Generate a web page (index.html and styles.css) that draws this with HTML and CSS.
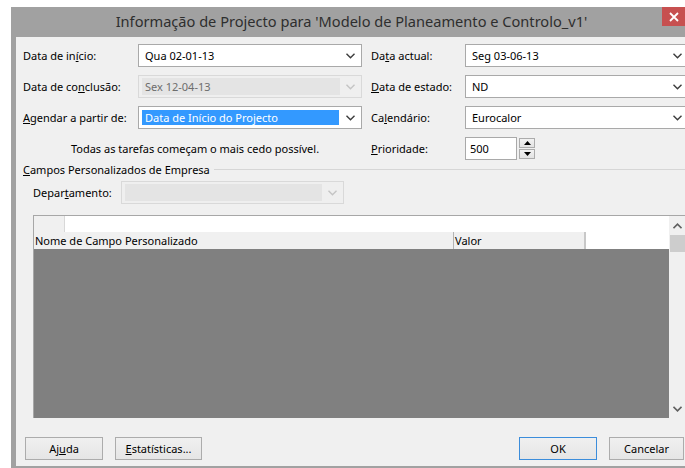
FILE: index.html
```html
<!DOCTYPE html>
<html lang="pt">
<head>
<meta charset="utf-8">
<title>Informação de Projecto</title>
<link rel="stylesheet" href="styles.css">
</head>
<body>
<div class="window">
  <div class="titlebar">
    <span class="title">Informação de Projecto para 'Modelo de Planeamento e Controlo_v1'</span>
    <div class="close">
      <svg width="10" height="10" viewBox="0 0 10 10"><path d="M1 1L9 9M9 1L1 9" stroke="#fff" stroke-width="1.8"/></svg>
    </div>
  </div>
  <div class="client">
    <div class="form">
      <span class="label">Data de in<u>í</u>cio:</span>
      <div class="combo"><span class="value">Qua 02-01-13</span><span class="arrow"><svg width="9" height="6" viewBox="0 0 9 6"><path d="M0.5 0.8L4.5 4.8L8.5 0.8" fill="none" stroke="#3c3c3c" stroke-width="1.4"/></svg></span></div>
      <span class="label col3">Da<u>t</u>a actual:</span>
      <div class="combo"><span class="value">Seg 03-06-13</span><span class="arrow"><svg width="9" height="6" viewBox="0 0 9 6"><path d="M0.5 0.8L4.5 4.8L8.5 0.8" fill="none" stroke="#3c3c3c" stroke-width="1.4"/></svg></span></div>

      <span class="label">Data de co<u>n</u>clusão:</span>
      <div class="combo disabled"><span class="value">Sex 12-04-13</span><span class="arrow"><svg width="9" height="6" viewBox="0 0 9 6"><path d="M0.5 0.8L4.5 4.8L8.5 0.8" fill="none" stroke="#c4c4c4" stroke-width="1.4"/></svg></span></div>
      <span class="label col3"><u>D</u>ata de estado:</span>
      <div class="combo"><span class="value">ND</span><span class="arrow"><svg width="9" height="6" viewBox="0 0 9 6"><path d="M0.5 0.8L4.5 4.8L8.5 0.8" fill="none" stroke="#3c3c3c" stroke-width="1.4"/></svg></span></div>

      <span class="label"><u>A</u>gendar a partir de:</span>
      <div class="combo"><span class="value selected">Data de Início do Projecto</span><span class="arrow"><svg width="9" height="6" viewBox="0 0 9 6"><path d="M0.5 0.8L4.5 4.8L8.5 0.8" fill="none" stroke="#3c3c3c" stroke-width="1.4"/></svg></span></div>
      <span class="label col3">Ca<u>l</u>endário:</span>
      <div class="combo"><span class="value">Eurocalor</span><span class="arrow"><svg width="9" height="6" viewBox="0 0 9 6"><path d="M0.5 0.8L4.5 4.8L8.5 0.8" fill="none" stroke="#3c3c3c" stroke-width="1.4"/></svg></span></div>

      <span class="note">Todas as tarefas começam o mais cedo possível.</span>
      <span class="label col3"><u>P</u>rioridade:</span>
      <div class="spin">
        <div class="spin-field">500</div>
        <div class="spin-buttons">
          <span class="spin-btn"><svg width="7" height="4" viewBox="0 0 7 4"><path d="M0 4L3.5 0L7 4Z" fill="#000"/></svg></span>
          <span class="spin-btn"><svg width="7" height="4" viewBox="0 0 7 4"><path d="M0 0L3.5 4L7 0Z" fill="#000"/></svg></span>
        </div>
      </div>
    </div>

    <div class="group-head"><span><u>C</u>ampos Personalizados de Empresa</span><span class="rule"></span></div>

    <div class="dept">
      <span class="label">Depar<u>t</u>amento:</span>
      <div class="combo disabled small"><span class="value"></span><span class="arrow"><svg width="9" height="6" viewBox="0 0 9 6"><path d="M0.5 0.8L4.5 4.8L8.5 0.8" fill="none" stroke="#c4c4c4" stroke-width="1.4"/></svg></span></div>
    </div>

    <div class="table">
      <div class="table-main">
        <div class="top-row"><span class="corner"></span></div>
        <div class="head-row">
          <span class="head-cell name">Nome de Campo Personalizado</span>
          <span class="head-cell val">Valor</span>
        </div>
        <div class="table-body"></div>
      </div>
      <div class="scrollbar">
        <span class="sb-arrow"><svg width="9" height="6" viewBox="0 0 9 6"><path d="M0.5 5.2L4.5 1.2L8.5 5.2" fill="none" stroke="#606060" stroke-width="1.6"/></svg></span>
        <span class="sb-thumb"></span>
        <span class="sb-track"></span>
        <span class="sb-arrow"><svg width="9" height="6" viewBox="0 0 9 6"><path d="M0.5 0.8L4.5 4.8L8.5 0.8" fill="none" stroke="#606060" stroke-width="1.6"/></svg></span>
      </div>
    </div>

    <div class="buttons">
      <button class="btn help">Aj<u>u</u>da</button>
      <button class="btn stats"><u>E</u>statísticas...</button>
      <span class="spacer"></span>
      <button class="btn ok">OK</button>
      <button class="btn cancel">Cancelar</button>
    </div>
  </div>
</div>
</body>
</html>
```

FILE: styles.css
```css
html, body {
  margin: 0;
  height: 100%;
  overflow: hidden;
  background: #fff;
}

body {
  font-family: "Noto Sans", "Open Sans", sans-serif;
  font-size: 11px;
  color: #000;
}

u {
  text-decoration: underline;
  text-underline-offset: 1px;
}

/* window frame */
.window {
  margin: 7px 0 0 11px;
  width: 680px;
  height: 461px;
  background: #a1a1a1;
  display: flex;
  flex-direction: column;
  padding-bottom: 2px;
  box-sizing: border-box;
}

.titlebar {
  height: 30px;
  display: flex;
  align-items: flex-start;
  flex: none;
}

.title {
  flex: 1;
  text-align: center;
  font-size: 14.6px;
  line-height: 29px;
  color: #2e2e2e;
  padding-left: 30px;
  white-space: nowrap;
}

.close {
  width: 29px;
  height: 19px;
  background: #c75050;
  display: flex;
  align-items: center;
  padding-left: 7px;
  box-sizing: border-box;
}

.client {
  margin-left: 5px;
  flex: 1;
  background: #f0f0f0;
  overflow: hidden;
}

/* upper field grid */
.form {
  display: grid;
  grid-template-columns: 115px 224px 103px 224px;
  grid-auto-rows: 23px;
  row-gap: 8px;
  padding: 7px 0 0 7px;
  align-items: center;
}

.label {
  white-space: nowrap;
}

.col3 {
  padding-left: 9px;
}

.combo {
  height: 23px;
  box-sizing: border-box;
  border: 1px solid #a9a9a9;
  background: #fff;
  display: flex;
  align-items: center;
  padding: 0 0 0 3px;
}

.combo .value {
  flex: 1;
  height: 15px;
  line-height: 15px;
  padding-left: 3px;
  white-space: nowrap;
}

.combo .value.selected {
  background: #3399ff;
  color: #fff;
  margin-right: 1px;
}

.combo .arrow {
  width: 21px;
  flex: none;
  display: flex;
  justify-content: center;
}

.combo.disabled {
  border-color: #d9d9d9;
  background: #efefef;
}

.combo.disabled .value {
  background: #e4e4e4;
  color: #6d6d6d;
  height: 17px;
  line-height: 17px;
}

.note {
  grid-column: 1 / 3;
  text-align: center;
  padding-left: 5px;
}

.spin {
  display: flex;
  align-items: center;
  gap: 2px;
}

.spin-field {
  width: 52px;
  height: 23px;
  box-sizing: border-box;
  border: 1px solid #a9a9a9;
  background: #fff;
  padding-left: 4px;
  line-height: 21px;
}

.spin-buttons {
  width: 16px;
  height: 21px;
  display: flex;
  flex-direction: column;
  gap: 1px;
}

.spin-btn {
  flex: 1;
  border: 1px solid #acacac;
  background: linear-gradient(#f2f2f2, #e3e3e3);
  display: flex;
  align-items: center;
  justify-content: center;
}

/* group box heading */
.group-head {
  display: flex;
  align-items: center;
  height: 16px;
  margin: 1px 0 0 7px;
  gap: 4px;
  white-space: nowrap;
}

.group-head .rule {
  flex: 1;
  height: 1px;
  background: #d6d6d6;
}

.dept {
  display: flex;
  align-items: center;
  margin: 4px 0 0 17px;
}

.dept .label {
  width: 88px;
}

.combo.small {
  width: 223px;
}

/* custom field table */
.table {
  display: flex;
  height: 203px;
  margin: 11px 0 0 17px;
  border-top: 1px solid #a7a7a7;
  box-sizing: border-box;
}

.table-main {
  width: 636px;
  border-left: 1px solid #a7a7a7;
  display: flex;
  flex-direction: column;
  box-sizing: border-box;
}

.top-row {
  height: 16px;
  background: #fff;
  display: flex;
}

.corner {
  width: 30px;
  background: #f0f0f0;
  border-right: 1px solid #d8d8d8;
}

.head-row {
  height: 17px;
  display: flex;
  background: #fff;
  line-height: 17px;
}

.head-cell {
  background: #f0f0f0;
  padding-left: 1px;
  box-sizing: border-box;
  white-space: nowrap;
}

.head-cell.name {
  width: 420px;
  border-right: 1px solid #b4b4b4;
}

.head-cell.val {
  width: 132px;
  border-right: 2px solid #c8c8c8;
}

.table-body {
  flex: 1;
  background: #808080;
}

.scrollbar {
  width: 16px;
  background: #f0f0f0;
  display: flex;
  flex-direction: column;
}

.sb-arrow {
  height: 19px;
  display: flex;
  align-items: center;
  justify-content: center;
}

.sb-thumb {
  height: 17px;
  margin-left: 1px;
  background: #cdcdcd;
}

.sb-track {
  flex: 1;
}

/* dialog buttons */
.buttons {
  display: flex;
  align-items: center;
  margin: 19px 7px 0 9px;
  gap: 12px;
}

.spacer {
  flex: 1;
}

.btn {
  height: 23px;
  font: inherit;
  color: #000;
  border: 1px solid #acacac;
  background: linear-gradient(#f0f0f0, #e5e5e5);
  padding: 0;
}

.btn.help { width: 78px; }
.btn.stats { width: 87px; }
.btn.ok { width: 78px; border-color: #3c8ddb; }
.btn.cancel { width: 75px; }
```
